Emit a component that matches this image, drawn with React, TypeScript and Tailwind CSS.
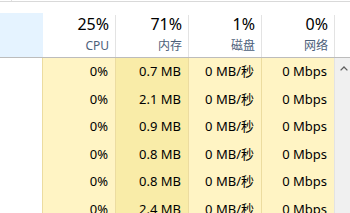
import React from "react";

const rows = ["0.7 MB", "2.1 MB", "0.9 MB", "0.8 MB", "0.8 MB", "2.4 MB"];

const headers = [
  { v: "25%", l: "CPU" },
  { v: "71%", l: "内存" },
  { v: "1%", l: "磁盘" },
  { v: "0%", l: "网络" },
];

export default function App() {
  return (
    <div
      className="w-[350px] h-[213px] overflow-hidden bg-white text-black"
      style={{ fontFamily: '"Noto Sans", "Noto Sans CJK SC", sans-serif' }}
    >
      {/* tab strip edge */}
      <div className="h-px flex">
        <div className="ml-[11px] w-px h-px bg-[#e0e0e0]" />
      </div>
      <div className="h-px bg-[#d9d9d9]" />
      <div className="h-[11px]" />

      {/* header */}
      <div className="flex h-[45px] border-b border-[#bcbcbc]">
        <div className="w-[43px] h-[44px] bg-[#e5f3ff]" />
        {headers.map((h) => (
          <div key={h.l} className="flex w-[73px] h-[44px]">
            <div className="w-[72px] flex flex-col items-end pr-[6px]">
              <div className="h-[22px] leading-[22px] text-[16px] text-black">{h.v}</div>
              <div className="h-[22px] leading-[22px] text-[12px] text-[#4c607a]">{h.l}</div>
            </div>
            <div className="w-px mt-[2px] h-[42px] bg-[#e3e3e3]" />
          </div>
        ))}
        <div className="flex-1" />
      </div>

      {/* data */}
      <div className="flex">
        <div className="flex flex-col w-[335px]">
          {rows.map((m, i) => (
            <div key={i} className="flex h-[27.5px] text-[13px] leading-[27.5px] shrink-0">
              <div className="w-[43px] bg-white border-r border-[#ecdca0]" />
              <div className="w-[73px] bg-[#fff4c4] border-r border-[#ecdca0] text-right pr-[7px]">0%</div>
              <div className="w-[73px] bg-[#f9eca8] border-r border-[#ecdca0] text-right pr-[7px]">{m}</div>
              <div className="w-[73px] bg-[#fff4c4] border-r border-[#ecdca0] text-right pr-[7px]">0 MB/秒</div>
              <div className="w-[73px] bg-[#fff4c4] border-r border-[#e3e3e3] text-right pr-[7px]">0 Mbps</div>
            </div>
          ))}
        </div>
        <div className="flex-1 h-[170px] bg-[#f0f0f0]">
          <svg width="8" height="5" viewBox="0 0 8 5" className="ml-[5px] mt-[8px] block">
            <path d="M0.6 4.4 L4 1 L7.4 4.4" fill="none" stroke="#606060" strokeWidth="1.3" />
          </svg>
        </div>
      </div>
    </div>
  );
}
